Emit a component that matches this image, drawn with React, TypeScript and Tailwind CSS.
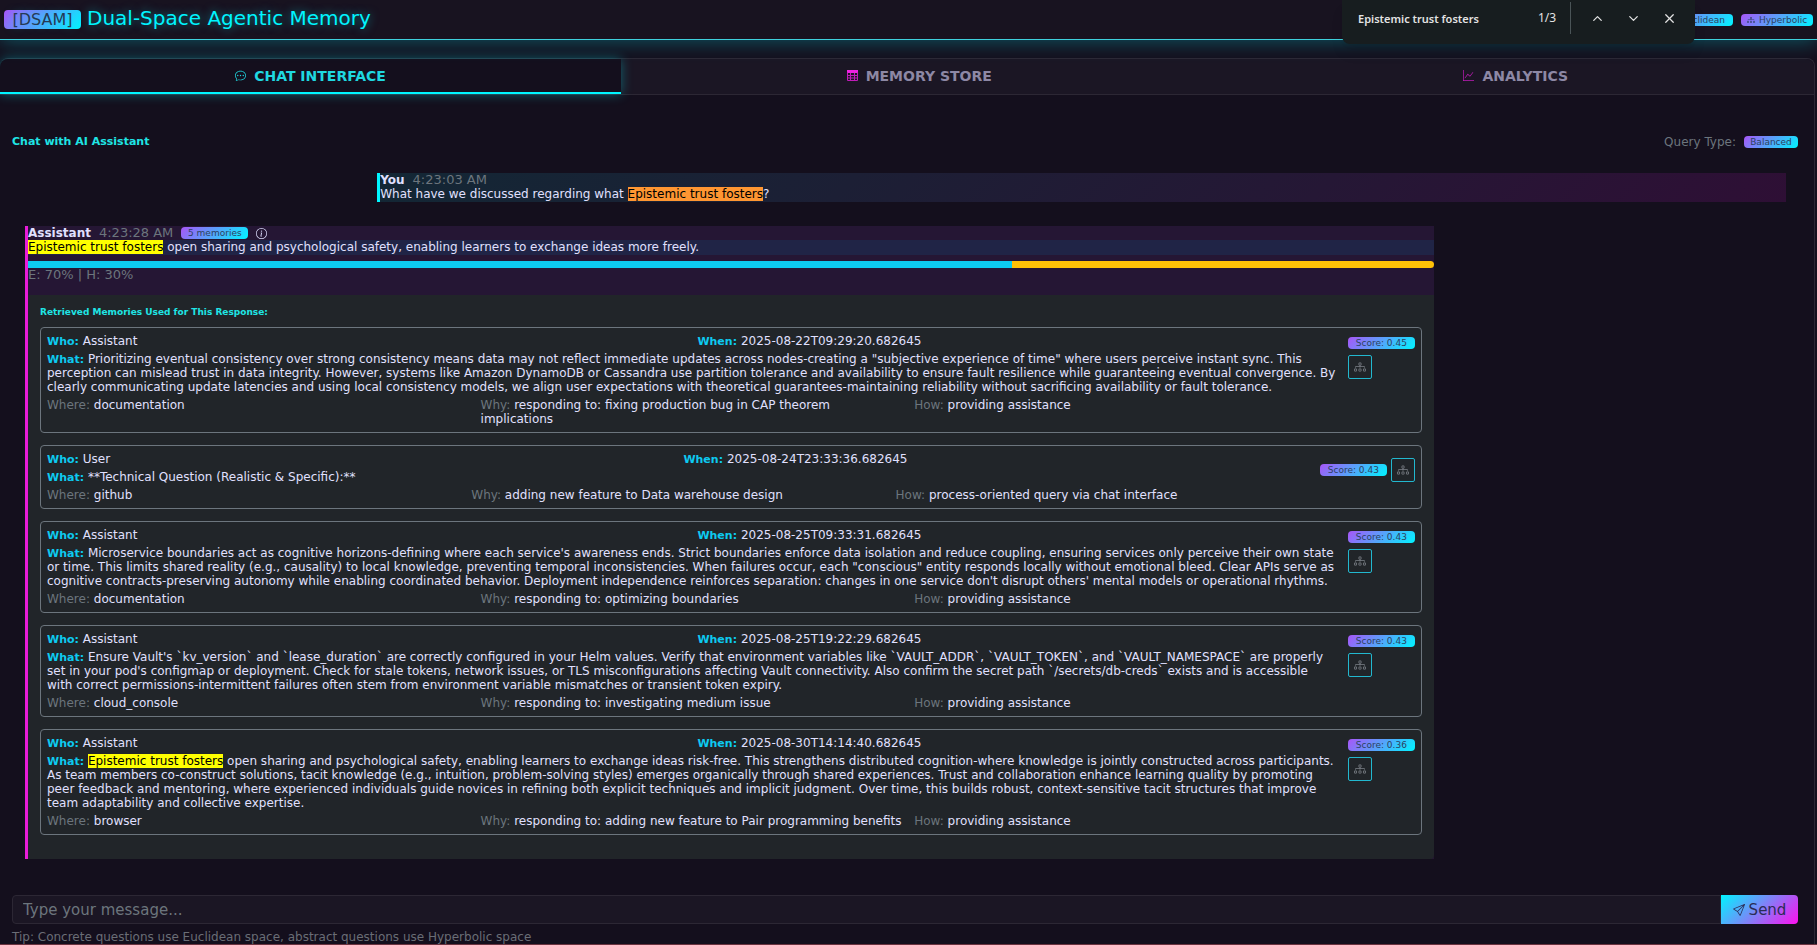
import React, { type ReactNode } from "react";
import { BsChatDots, BsGraphUp, BsDiagram3, BsSend, BsInfoCircle, BsBox } from "react-icons/bs";
import { ChevronUp, ChevronDown, X } from "lucide-react";

const badge =
  "inline-flex items-center justify-center gap-1 rounded bg-linear-[135deg,#a855f7,#00f5ff] px-1 text-[9px] leading-3 h-3 text-[#2c4260]";

type Memory = {
  who: string;
  when: string;
  what: ReactNode;
  where: string;
  why: string;
  how: string;
  score: string;
  wide?: boolean;
};

const memories: Memory[] = [
  {
    who: "Assistant",
    when: "2025-08-22T09:29:20.682645",
    what: 'Prioritizing eventual consistency over strong consistency means data may not reflect immediate updates across nodes-creating a "subjective experience of time" where users perceive instant sync. This perception can mislead trust in data integrity. However, systems like Amazon DynamoDB or Cassandra use partition tolerance and availability to ensure fault resilience while guaranteeing eventual convergence. By clearly communicating update latencies and using local consistency models, we align user expectations with theoretical guarantees-maintaining reliability without sacrificing availability or fault tolerance.',
    where: "documentation",
    why: "responding to: fixing production bug in CAP theorem implications",
    how: "providing assistance",
    score: "0.45",
  },
  {
    who: "User",
    when: "2025-08-24T23:33:36.682645",
    what: "**Technical Question (Realistic & Specific):**",
    where: "github",
    why: "adding new feature to Data warehouse design",
    how: "process-oriented query via chat interface",
    score: "0.43",
    wide: true,
  },
  {
    who: "Assistant",
    when: "2025-08-25T09:33:31.682645",
    what: "Microservice boundaries act as cognitive horizons-defining where each service's awareness ends. Strict boundaries enforce data isolation and reduce coupling, ensuring services only perceive their own state or time. This limits shared reality (e.g., causality) to local knowledge, preventing temporal inconsistencies. When failures occur, each \"conscious\" entity responds locally without emotional bleed. Clear APIs serve as cognitive contracts-preserving autonomy while enabling coordinated behavior. Deployment independence reinforces separation: changes in one service don't disrupt others' mental models or operational rhythms.",
    where: "documentation",
    why: "responding to: optimizing boundaries",
    how: "providing assistance",
    score: "0.43",
  },
  {
    who: "Assistant",
    when: "2025-08-25T19:22:29.682645",
    what: "Ensure Vault's `kv_version` and `lease_duration` are correctly configured in your Helm values. Verify that environment variables like `VAULT_ADDR`, `VAULT_TOKEN`, and `VAULT_NAMESPACE` are properly set in your pod's configmap or deployment. Check for stale tokens, network issues, or TLS misconfigurations affecting Vault connectivity. Also confirm the secret path `/secrets/db-creds` exists and is accessible with correct permissions-intermittent failures often stem from environment variable mismatches or transient token expiry.",
    where: "cloud_console",
    why: "responding to: investigating medium issue",
    how: "providing assistance",
    score: "0.43",
  },
  {
    who: "Assistant",
    when: "2025-08-30T14:14:40.682645",
    what: (
      <>
        <mark className="bg-[#ffff00] text-black">Epistemic trust fosters</mark> open sharing and psychological safety,
        enabling learners to exchange ideas risk-free. This strengthens distributed cognition-where knowledge is jointly
        constructed across participants. As team members co-construct solutions, tacit knowledge (e.g., intuition,
        problem-solving styles) emerges organically through shared experiences. Trust and collaboration enhance learning
        quality by promoting peer feedback and mentoring, where experienced individuals guide novices in refining both
        explicit techniques and implicit judgment. Over time, this builds robust, context-sensitive tacit structures that
        improve team adaptability and collective expertise.
      </>
    ),
    where: "browser",
    why: "responding to: adding new feature to Pair programming benefits",
    how: "providing assistance",
    score: "0.36",
  },
];

function TableIcon() {
  return (
    <svg width="11" height="11" viewBox="0 0 11 11" fill="none" stroke="#c01cb8" aria-hidden="true">
      <rect x="0" y="0" width="11" height="3" fill="#ee22e0" stroke="none" />
      <path d="M.5 2.5v8h10v-8M3.5 3v8M7.5 3v8M0 5.5h11M0 8h11" />
    </svg>
  );
}

function Field({ label, children, muted = false }: { label: string; children: ReactNode; muted?: boolean }) {
  return (
    <div className="pr-3">
      <span className={muted ? "text-[#6c757d]" : "text-[11px] leading-3 font-bold text-[#0dcaf0]"}>{label}:</span> {children}
    </div>
  );
}

function MemoryCard({ m }: { m: Memory }) {
  return (
    <article className="flex rounded-sm border border-[#6c757d] p-1.5">
      <div className="min-w-0 flex-1">
        <div className="grid grid-cols-2">
          <Field label="Who">{m.who}</Field>
          <Field label="When">{m.when}</Field>
        </div>
        <p className="mt-1 pr-[11px]">
          <span className="text-[11px] leading-3 font-bold text-[#0dcaf0]">What:</span> {m.what}
        </p>
        <div className="mt-1 grid grid-cols-3">
          <Field muted label="Where">{m.where}</Field>
          <Field muted label="Why">{m.why}</Field>
          <Field muted label="How">{m.how}</Field>
        </div>
      </div>
      <div className={m.wide ? "flex shrink-0 items-center gap-1 self-start pt-1.5" : "flex w-[67px] shrink-0 flex-col gap-1.5 pt-[3px]"}>
        <span className={badge + " w-[67px]"}>Score: {m.score}</span>
        <button aria-label="Show in graph" className="flex size-6 items-center justify-center rounded-xs border border-[#22b8cf] text-[#7d8289]">
          <BsDiagram3 size={12} />
        </button>
      </div>
    </article>
  );
}

export default function App() {
  return (
    <div className="flex min-h-screen flex-col border-b border-[#6b3340] bg-[#140f1d] font-['DejaVu_Sans',sans-serif] text-xs leading-[14px] text-[#e0e0ff]">
      <header className="relative z-10 flex h-10 items-center justify-between border-b border-[#3fd0dc] bg-[#181320] px-1 shadow-[0_2px_20px_rgba(0,245,255,0.3)]">
        <h1 className="flex items-center gap-1.5 text-[20px] leading-6 text-[#00f5ff] [text-shadow:0_0_10px_rgba(0,245,255,0.5)]">
          <span className="flex h-[19px] w-[77px] items-center justify-center rounded bg-linear-[135deg,#a855f7,#00f5ff] text-base text-[#243a55]">[DSAM]</span>
          <span className="pb-1">Dual-Space Agentic Memory</span>
        </h1>
        <div className="flex gap-2">
          <span className={badge + " w-[72px]"}><BsBox size={8} />Euclidean</span>
          <span className={badge + " w-[72px]"}><BsDiagram3 size={8} />Hyperbolic</span>
        </div>
        <div className="absolute top-0 right-[122px] flex h-11 w-[353px] items-center rounded-b-lg bg-[#171d1f] pr-2 pb-2 pl-4 font-['Noto_Sans',sans-serif] text-[11px] text-[#e3e3e3] shadow-lg">
          <label className="sr-only" htmlFor="find">Find</label>
          <input id="find" className="h-5 min-w-0 flex-1 bg-transparent font-semibold outline-none" defaultValue="Epistemic trust fosters" />
          <span className="w-8 text-xs">1/3</span>
          <span className="h-8 w-px bg-[#4a5457]" />
          <button aria-label="Previous match" className="ml-2 flex w-9 justify-center"><ChevronUp size={15} /></button>
          <button aria-label="Next match" className="flex w-9 justify-center"><ChevronDown size={15} /></button>
          <button aria-label="Close" className="flex w-9 justify-center"><X size={15} /></button>
        </div>
      </header>
      <main className="mt-[18px] mr-0.5 flex flex-1 flex-col rounded-t-lg border-t border-r border-[#2c2734]">
        <nav className="grid h-9 grid-cols-[621px_1fr_1fr] rounded-t-lg border-b border-[#2c2734] bg-[#1b1624] text-sm text-[#8d88a5]">
          <button className="flex items-center justify-center gap-2 rounded-tl-lg border-b-2 border-[#00f5ff] bg-[#140f1d] font-bold text-[#1fd8e0] shadow-[0_0_12px_rgba(0,245,255,0.35)]"><BsChatDots size={11} />CHAT INTERFACE</button>
          <button className="flex items-center justify-center gap-2 pb-0.5 font-bold"><TableIcon />MEMORY STORE</button>
          <button className="flex items-center justify-center gap-2 pb-0.5 font-bold"><BsGraphUp size={11} className="text-[#c01cb8]" />ANALYTICS</button>
        </nav>
        <section className="flex flex-1 flex-col px-3 pt-10">
          <div className="flex items-center justify-between pr-1">
            <h2 className="text-[11px] font-bold text-[#1fe5e5]">Chat with AI Assistant</h2>
            <div className="flex items-center gap-2 text-[#6c757d]">Query Type: <span className={badge + " w-[54px]"}>Balanced</span></div>
          </div>
          <div className="mt-6 pr-4 pl-[13px]">
            <div className="ml-auto w-4/5 border-l-3 border-[#00f5ff] bg-linear-[135deg,#132735,#2e0f35] pb-px">
              <div className="flex gap-2"><b>You</b><span className="text-[13px] leading-[14px] text-[#6c757d]">4:23:03 AM</span></div>
              <p>What have we discussed regarding what <mark className="bg-[#ff9632] text-black">Epistemic trust fosters</mark>?</p>
            </div>
            <div className="mt-6 w-4/5 border-l-3 border-[#e81cd8] bg-[#251634]">
              <div className="flex items-center gap-2"><b>Assistant</b><span className="text-[13px] leading-[14px] text-[#6c757d]">4:23:28 AM</span><span className={badge + " w-[67px]"}>5 memories</span><BsInfoCircle size={11} /></div>
              <p className="bg-[#202446] pb-px"><mark className="bg-[#ffff00] text-black">Epistemic trust fosters</mark> open sharing and psychological safety, enabling learners to exchange ideas more freely.</p>
              <div className="mt-1.5 flex h-[7px] overflow-hidden rounded-r-sm"><div className="w-7/10 bg-[#0dcaf0]" /><div className="w-3/10 bg-[#ffc107]" /></div>
              <p className="text-[13px] leading-[14px] text-[#6c757d]">E: 70% | H: 30%</p>
              <div className="mt-[13px] rounded-br-sm bg-[#212529] px-3 pt-2.5 pb-6">
                <h3 className="mb-2 text-[9px] font-bold text-[#1fe5e5]">Retrieved Memories Used for This Response:</h3>
                <div className="flex flex-col gap-3">{memories.map((m) => <MemoryCard key={m.when} m={m} />)}</div>
              </div>
            </div>
          </div>
          <form className="mt-9 flex h-[29px] pr-1">
            <label className="sr-only" htmlFor="msg">Message</label>
            <input id="msg" className="min-w-0 flex-1 rounded-l border border-[#2c2734] bg-[#1b1624] px-2.5 text-[15px] placeholder-[#6c757d]" placeholder="Type your message..." />
            <button type="button" className="flex w-[77px] items-center justify-center gap-1 rounded-r bg-linear-[135deg,#00f5ff,#ff10f0] text-[15px] text-[#2b2b55]"><BsSend size={12} />Send</button>
          </form>
          <p className="mt-1.5 text-[#6a6d76]">Tip: Concrete questions use Euclidean space, abstract questions use Hyperbolic space</p>
        </section>
      </main>
    </div>
  );
}
